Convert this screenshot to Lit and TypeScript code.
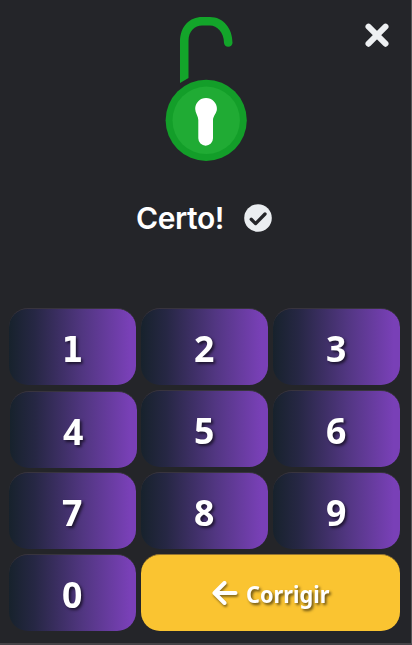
import { LitElement, html, css } from "lit";
import { customElement } from "lit/decorators.js";
import { classMap } from "lit/directives/class-map.js";

@customElement("app-root")
export class AppRoot extends LitElement {
  static styles = css`
    :host {
      display: block;
      box-sizing: border-box;
      width: 412px;
      height: 645px;
      background: #242529;
      border-right: 1px solid #55565a;
      border-bottom: 2px solid #454347;
      color: #fff;
      overflow: hidden;
    }
    svg { display: block; }
    .top {
      display: grid;
      grid-template-columns: 1fr 82px 1fr;
      height: 162px;
    }
    .lock { grid-column: 2; }
    .close {
      justify-self: end;
      margin: 23px 22px 0 0;
      width: 24px;
      height: 24px;
      padding: 0;
      border: 0;
      background: none;
    }
    .status {
      display: flex;
      align-items: center;
      height: 40px;
      margin: 36px 0 70px 136px;
    }
    .message {
      width: 108px;
      font: 600 30px/40px Inter, sans-serif;
      letter-spacing: -0.4px;
      white-space: nowrap;
    }
    .pad {
      display: grid;
      grid-template-columns: repeat(3, 127px);
      grid-auto-rows: 77px;
      gap: 5px;
      margin-left: 9px;
    }
    .key {
      display: flex;
      align-items: center;
      justify-content: center;
      padding: 3px 0 0;
      border: 0;
      border-top: 1px solid #38343e;
      border-radius: 19px;
      color: #fff;
      background: linear-gradient(90deg, #17222c 0%, #262744 20%, #513681 58%, #7940b7 95%) border-box;
      font: 700 36px/1 "Noto Sans", sans-serif;
      text-shadow: 2px 2px 3px rgba(0, 0, 0, 0.6);
    }
    .digit { transform: scaleX(0.99); }
    .one {
      padding-top: 5px;
      font-family: "DejaVu Sans Condensed", "DejaVu Sans", sans-serif;
      font-stretch: condensed;
    }
    .one .digit { transform: scaleX(0.94); }
    .pressed { transform: translate(1px, 1px); }
    .wide {
      grid-column: span 2;
      gap: 8px;
      padding: 3px 1px 0 0;
      border-top-color: #94742f;
      background: #fac431;
      font-size: 23.5px;
    }
    .label {
      width: 83px;
      transform: scaleX(0.925);
      transform-origin: left;
      white-space: nowrap;
    }
    .arrow {
      margin-top: -3px;
      filter: drop-shadow(1px 2px 1px rgba(0, 0, 0, 0.45));
    }
  `;

  private keys = ["1", "2", "3", "4", "5", "6", "7", "8", "9", "0"];

  render() {
    return html`
      <div class="top">
        <svg class="lock" width="82" height="162" viewBox="165 0 82 162">
          <path d="M180 83V42C180 26 190 17 202 17H210C223 17 232.500 28 232.500 43A4.300 4.300 0 0 1 224 43C224 32 217 25.500 210 25.500H202C195 25.500 188.500 31 188.500 41V78Z" fill="#13a52a" />
          <circle cx="206.200" cy="120.300" r="40.600" fill="#139e29" />
          <circle cx="206.200" cy="120.300" r="33.700" fill="#20ab34" />
          <path d="M206 98A10.800 10.800 0 0 0 195.200 109C195.200 113 198.300 116 198.300 120V138.300A7.300 7.300 0 0 0 213 138.300V120C213 116 216.900 113 216.900 109A10.800 10.800 0 0 0 206 98Z" fill="#fff" />
        </svg>
        <button class="close" aria-label="Fechar">
          <svg width="24" height="24" viewBox="0 0 24 24">
            <path d="M3.500 3.700L20.500 20.700M20.500 3.700L3.500 20.700" stroke="#eef0f2" stroke-width="6" stroke-linecap="round" />
          </svg>
        </button>
      </div>
      <div class="status">
        <span class="message">Certo!</span>
        <svg width="28" height="28" viewBox="0 0 28 28">
          <circle cx="14" cy="14" r="13.800" fill="#ebeef1" />
          <path d="M7.200 15.300L11.600 19.600L21 10" fill="none" stroke="#242529" stroke-width="3.300" stroke-linecap="round" stroke-linejoin="round" />
        </svg>
      </div>
      <div class="pad">
        ${this.keys.map(
          (k) => html`<button class=${classMap({ key: true, one: k === "1", pressed: k === "4" })}><span class="digit">${k}</span></button>`
        )}
        <button class="key wide">
          <svg class="arrow" width="27" height="26" viewBox="0 0 27 26">
            <path d="M13.500 3L3.500 13L13.500 23M4 13H24.500" fill="none" stroke="#fff" stroke-width="4" stroke-linecap="round" stroke-linejoin="round" />
          </svg>
          <span class="label">Corrigir</span>
        </button>
      </div>
    `;
  }
}
